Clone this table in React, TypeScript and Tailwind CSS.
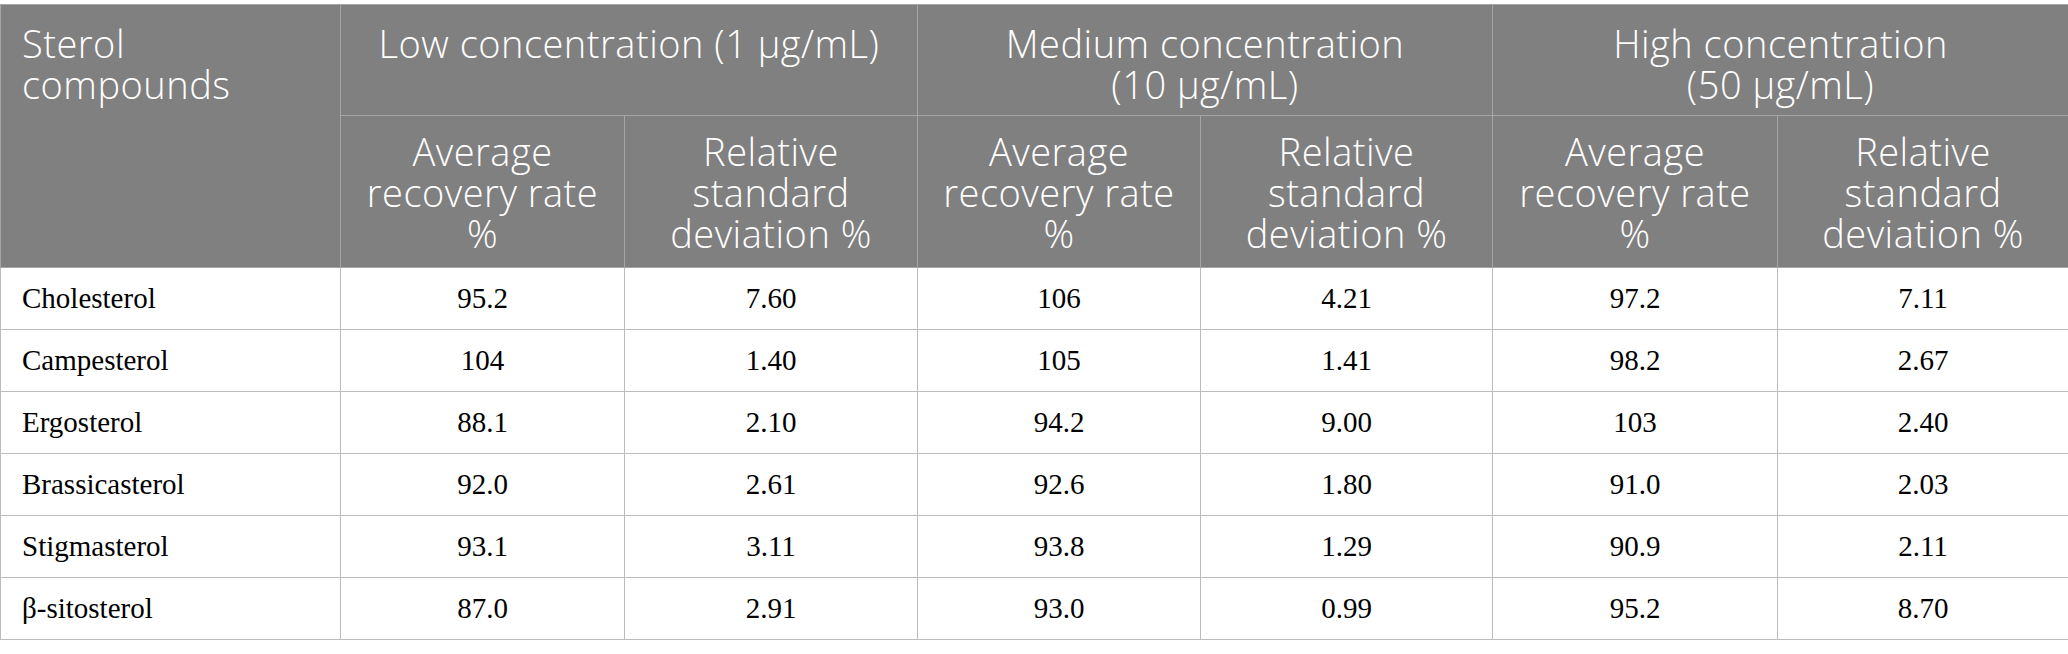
import React from "react";

type Row = { name: string; values: string[] };

const rows: Row[] = [
  { name: "Cholesterol", values: ["95.2", "7.60", "106", "4.21", "97.2", "7.11"] },
  { name: "Campesterol", values: ["104", "1.40", "105", "1.41", "98.2", "2.67"] },
  { name: "Ergosterol", values: ["88.1", "2.10", "94.2", "9.00", "103", "2.40"] },
  { name: "Brassicasterol", values: ["92.0", "2.61", "92.6", "1.80", "91.0", "2.03"] },
  { name: "Stigmasterol", values: ["93.1", "3.11", "93.8", "1.29", "90.9", "2.11"] },
  { name: "β-sitosterol", values: ["87.0", "2.91", "93.0", "0.99", "95.2", "8.70"] },
];

const groups: { id: string; lines: string[] }[] = [
  { id: "low", lines: ["Low concentration (1 μg/mL)"] },
  { id: "medium", lines: ["Medium concentration", "(10 μg/mL)"] },
  { id: "high", lines: ["High concentration", "(50 μg/mL)"] },
];

const headCell =
  "border border-[#a6a6a6] bg-[#808080] align-top text-center text-white font-['Open_Sans',sans-serif] text-[38px] leading-[41px] tracking-[0.5px] font-light px-[16px]";

const bodyCell =
  "border border-[#bdbdbd] h-[62px] p-0 text-center align-middle text-black font-['Liberation_Serif',serif] text-[29px]";

export default function App() {
  return (
    <div className="w-[2068px] bg-white pt-[4px]">
      <table className="w-[2068px] table-fixed border-collapse">
        <colgroup>
          <col className="w-[340px]" />
          <col className="w-[284px]" />
          <col className="w-[293px]" />
          <col className="w-[283px]" />
          <col className="w-[292px]" />
          <col className="w-[285px]" />
          <col className="w-[291px]" />
        </colgroup>
        <thead>
          <tr className="h-[111px]">
            <th rowSpan={2} className={`${headCell} text-left pl-[21px] pt-[18px]`}>
              Sterol
              <br />
              compounds
            </th>
            {groups.map((g) => (
              <th key={g.id} colSpan={2} className={`${headCell} pt-[18px] pb-[10px]`}>
                {g.lines.map((l, i) => (
                  <div key={i}>{l}</div>
                ))}
              </th>
            ))}
          </tr>
          <tr className="h-[151px]">
            {groups.map((g) => (
              <React.Fragment key={g.id}>
                <th className={`${headCell} pt-[15px] pb-[13px]`}>
                  Average
                  <br />
                  recovery rate
                  <br />%
                </th>
                <th className={`${headCell} pt-[15px] pb-[13px]`}>
                  Relative
                  <br />
                  standard
                  <br />
                  deviation %
                </th>
              </React.Fragment>
            ))}
          </tr>
        </thead>
        <tbody>
          {rows.map((r) => (
            <tr key={r.name}>
              <td className={`${bodyCell} text-left pl-[21px]`}>{r.name}</td>
              {r.values.map((v, i) => (
                <td key={i} className={bodyCell}>
                  {v}
                </td>
              ))}
            </tr>
          ))}
        </tbody>
      </table>
    </div>
  );
}
